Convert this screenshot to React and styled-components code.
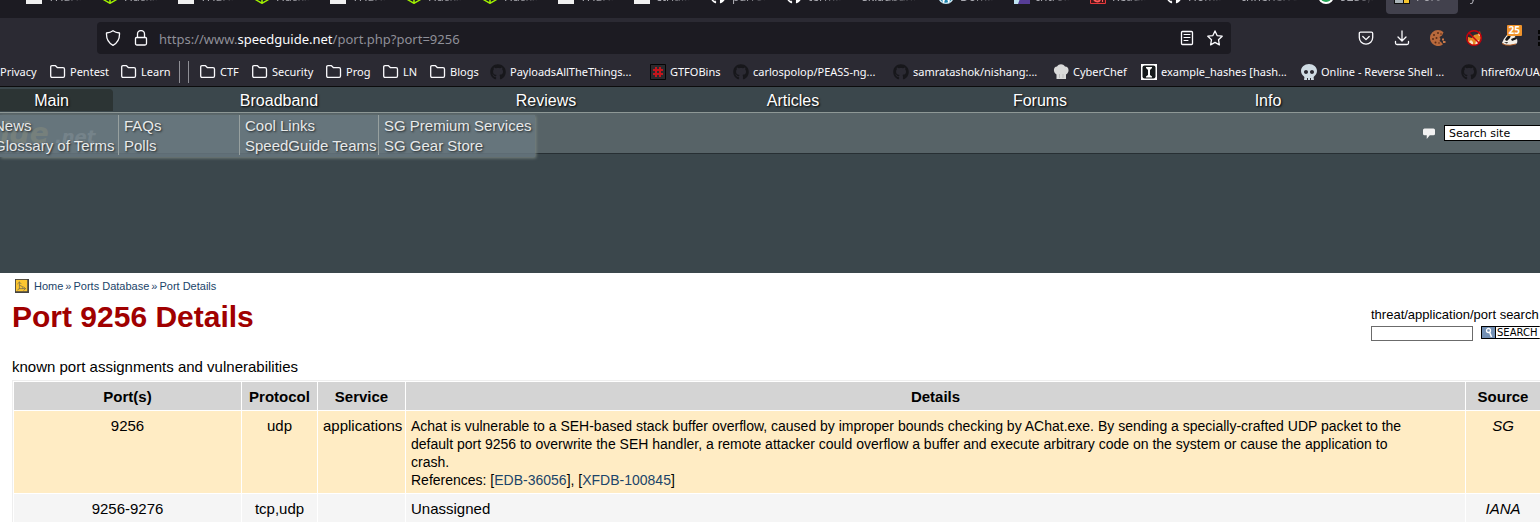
import React from 'react';
import styled, { createGlobalStyle } from 'styled-components';
import { FaGithub, FaWordpress, FaSkull } from 'react-icons/fa';
import { SiHackthebox } from 'react-icons/si';

const uiFont = '"Noto Sans", "Open Sans", sans-serif';
const siteFont = '"Liberation Sans", Arial, sans-serif';

const GlobalStyle = createGlobalStyle`
  *, *::before, *::after { box-sizing: border-box; }
  body { margin: 0; background: #fff; overflow: hidden; font-family: ${siteFont}; }
  a { text-decoration: none; color: inherit; }
`;

/* ---------- browser chrome ---------- */
const Chrome = styled.header`
  background: #2b2a33;
  color: #fbfbfe;
  font-family: ${uiFont};
  border-bottom: 1px solid #0c0c0d;
`;
const TabStrip = styled.div`
  display: flex;
  align-items: flex-end;
  gap: 4px;
  height: 18px;
  padding: 0 0 4px 18px;
  background: #1c1b22;
  overflow: hidden;
`;
const Tab = styled.button`
  flex: 0 0 72px;
  display: flex;
  align-items: center;
  gap: 6px;
  height: 36px;
  padding: 0 8px;
  border: 0;
  border-radius: 4px;
  background: ${(p) => (p.$active ? '#42414d' : 'transparent')};
  color: #a9a9b0;
  font: 12px ${uiFont};
  white-space: nowrap;
  overflow: hidden;
  svg { flex: none; }
`;
const TabLabel = styled.span`
  flex: 1;
  text-align: left;
  overflow: hidden;
  mask-image: linear-gradient(to right, #000 40%, transparent);
`;
const Toolbar = styled.div`
  display: flex;
  align-items: center;
  height: 40px;
  padding-left: 97px;
`;
const UrlBox = styled.form`
  flex: 1;
  display: flex;
  align-items: center;
  gap: 12px;
  height: 32px;
  padding: 0 8px;
  border-radius: 4px;
  background: #1c1b22;
`;
const UrlText = styled.a`
  flex: 1;
  padding-top: 2px;
  margin-left: -2px;
  color: #8f8f98;
  font-size: 13px;
  line-height: 20px;
  strong { font-weight: 400; color: #fbfbfe; }
`;
const IconButton = styled.button`
  position: relative;
  display: flex;
  align-items: center;
  justify-content: center;
  width: 16px;
  height: 16px;
  padding: 0;
  border: 0;
  background: none;
  color: #fbfbfe;
`;
const Actions = styled.div`
  display: flex;
  flex: 0 0 309px;
  min-width: 0;
  gap: 20px;
  padding-left: 127px;
  ${IconButton} { flex: 0 0 16px; }
`;
const Badge = styled.span`
  position: absolute;
  top: -5px;
  right: -4px;
  padding: 0 2px;
  border-radius: 1px;
  background: #f0932b;
  color: #fff;
  font: 700 10px/11px ${uiFont};
`;
const Bookmarks = styled.nav`
  display: flex;
  align-items: center;
  gap: 12px;
  height: 28px;
  overflow: hidden;
`;
const Bookmark = styled.a`
  flex: 0 0 ${(p) => p.$w}px;
  min-width: 0;
  display: flex;
  align-items: center;
  gap: 4px;
  font-size: 11px;
  line-height: 16px;
  white-space: nowrap;
  svg { flex: none; }
`;
const Divider = styled.span`
  flex: 0 0 10px;
  height: 22px;
  margin: 0 -1px 0 -2px;
  border: solid #8f8f96;
  border-width: 0 1px;
`;

/* ---------- site header ---------- */
const SiteHeader = styled.header`
  position: relative;
  min-height: 186px;
  background: #3b474c;
`;
const MainNav = styled.nav`
  display: grid;
  grid-template-columns: 113fr 332fr 202fr 292fr 202fr 254fr 145fr;
  height: 26px;
  padding-top: 2px;
  border-bottom: 1px solid #8e9896;
`;
const NavItem = styled.a`
  height: 22px;
  padding-right: ${(p) => (p.$active ? 10 : 0)}px;
  border-radius: 0 4px 0 0;
  background: ${(p) => (p.$active ? '#2c3434' : 'transparent')};
  color: #fff;
  font-size: 16px;
  line-height: 23px;
  text-align: center;
  text-shadow: 1px 1px 2px #000;
`;
const Band = styled.div`
  display: flex;
  align-items: center;
  justify-content: space-between;
  height: 41px;
  background: #576367;
  border-bottom: 1px solid #272f33;
`;
const Logo = styled.span`
  color: #b9a862;
  font: italic 700 28px/28px "DejaVu Sans", sans-serif;
  padding-top: 4px;
  small { font-size: 18px; color: #b4bcbc; }
`;
const SiteSearch = styled.form`
  display: flex;
  align-items: center;
  gap: 9px;
  input {
    width: 96px;
    height: 16px;
    padding: 0 4px;
    border: 1px solid #000;
    border-right: 0;
    border-radius: 0;
    font: 11px "DejaVu Sans", sans-serif;
    color: #000;
    &::placeholder { color: #000; opacity: 1; }
  }
`;
const Menu = styled.div`
  position: absolute;
  top: 28px;
  left: 0;
  display: flex;
  height: 42px;
  background: rgba(105, 120, 129, 0.84);
  box-shadow: 1px 1px 3px #7c8783;
`;
const MenuColumn = styled.ul`
  width: ${(p) => p.$w}px;
  height: 40px;
  margin: 0;
  padding: 1px 5px 0;
  list-style: none;
  font-size: 15px;
  line-height: 20px;
  color: #e8eaea;
  text-shadow: 1px 1px 2px #22282b;
  white-space: nowrap;
  & + & { border-left: 1px solid #97a09f; }
  &:first-child { padding-left: 0; text-indent: -6px; }
`;

/* ---------- page ---------- */
const Main = styled.main`
  padding: 5px 0 0 12px;
  color: #000;
`;
const Crumbs = styled.nav`
  display: flex;
  align-items: center;
  gap: 2px;
  height: 15px;
  padding-left: 3px;
  font-size: 11px;
  color: #1b4469;
  svg { margin-right: 3px; }
`;
const TitleRow = styled.div`
  display: flex;
  justify-content: space-between;
  align-items: flex-start;
  height: 65px;
`;
const Title = styled.h1`
  margin: 5px 0 0;
  color: #a00000;
  font-size: 30px;
  line-height: 38px;
`;
const PortSearch = styled.form`
  width: 169px;
  padding-top: 14px;
  font-size: 13px;
  line-height: 16px;
  white-space: nowrap;
`;
const PortSearchRow = styled.div`
  display: flex;
  gap: 8px;
  padding-top: 3px;
  input {
    width: 102px;
    height: 15px;
    padding: 0;
    border: 1px solid #6b6b6b;
    border-radius: 0;
  }
`;
const SearchButton = styled.button`
  display: flex;
  align-items: center;
  width: 59px;
  height: 13px;
  padding: 0;
  border: 1px solid #000;
  border-right: 0;
  border-radius: 1px;
  background: #fff;
  color: #000;
  font: 10px/11px "DejaVu Sans", sans-serif;
  svg { flex: none; margin-right: 1px; }
`;
const Intro = styled.p`
  margin: 0;
  padding-bottom: 4px;
  font-size: 15px;
  line-height: 18px;
`;
const PortTable = styled.table`
  width: 100%;
  table-layout: fixed;
  border-collapse: separate;
  border-spacing: 0;
  border: solid #eee;
  border-width: 1px 0 0 1px;
  padding: 1px 0 0 1px;
  font-size: 15px;
  line-height: 18px;
  th, td { border: solid #fff; border-width: 0 1px 1px 0; vertical-align: top; text-align: center; }
  th:last-child, td:last-child { border-right: 0; }
  th { padding: 6px 0 4px; background: #d4d4d4; }
  td { padding: 6px 5px 4px; }
  td:nth-child(4) { text-align: left; }
  td:last-child { font-style: italic; }
`;
const Row = styled.tr`
  background: ${(p) => (p.$known ? '#ffecc4' : '#f5f5f5')};
`;
const Description = styled.div`
  font-size: 14px;
`;
const Ref = styled.a`
  color: #1b4469;
`;
const Col = styled.col`
  width: ${(p) => (p.$w ? `${p.$w}px` : 'auto')};
`;

/* ---------- drawings ---------- */
const line = { fill: 'none', stroke: 'currentColor', strokeWidth: 1.3, strokeLinejoin: 'round', strokeLinecap: 'round' };
const Svg = ({ s = 16, children, ...rest }) => (
  <svg width={s} height={s} viewBox="0 0 16 16" aria-hidden="true" {...rest}>{children}</svg>
);
const Folder = () => (
  <Svg><path {...line} d="M.7 12V3Q.7 1.700 2 1.700h3.500l2 2H13q1.500 0 1.500 1.500V12q0 1.300-1.300 1.300H2Q.7 13.300.7 12z" /></Svg>
);
const Doc = () => <Svg><path fill="#f0f0f0" d="M0 0h16v16H0z" /></Svg>;
const Htb = () => <SiHackthebox size={16} color="#9fef00" />;
const Git = () => <FaGithub size={16} color="#fff" />;
const Wp = () => <Svg><circle cx="8" cy="8" r="8" fill="#fff" /><FaWordpress size={16} color="#1b83ad" /></Svg>;
const Purple = () => <Svg><path fill="#bfe3f2" d="M0 0h12v16H0z" /><path fill="#563d96" d="M10 0h6v16H4z" /></Svg>;
const Red = () => <Svg><path fill="#4a1518" stroke="#e5383b" d="M.5.5h15v15H.5z" /><path d="M4 12q4 3 6 0M12 13h1" stroke="#ff5a5a" strokeWidth="2" fill="none" /></Svg>;
const Green = () => <Svg><circle cx="8" cy="8" r="8" fill="#fff" /><circle cx="8" cy="8" r="6" fill="#23a455" /></Svg>;
const Guide = () => <Svg><path fill="#111" d="M0 0h16v16H0z" /><path fill="#aab4b8" d="M1 10h8v5H1z" /><path fill="#f6c52d" d="M10 10h5v5h-5z" /></Svg>;
const Shield = () => <Svg><path {...line} d="M8 .7c2 1.500 4 2 6.500 2.300C14.800 9 12.500 13 8 15.300 3.500 13 1.200 9 1.500 3 4 2.700 6 2.200 8 .7z" /></Svg>;
const Lock = () => <Svg><path {...line} d="M4.500 7.500V4a3.500 3.500 0 0 1 7 0v3.500M3.500 7.500h9q1 0 1 1v5q0 1.500-1.500 1.500H4q-1.500 0-1.500-1.500v-5q0-1 1-1z" /></Svg>;
const Reader = () => <Svg><path {...line} d="M3.500 1.500h9q1 0 1 1v11q0 1-1 1h-9q-1 0-1-1v-11q0-1 1-1z" /><path {...line} strokeWidth="1" d="M5 4.500h6M5 7.500h6M5 10.500h4" /></Svg>;
const Star = () => <Svg><path {...line} d="M8 .9l2.100 4.700 5.100.6-3.700 3.500.9 5.200L8 12.400l-4.400 2.500.9-5.200L.8 6.200l5.100-.6z" /></Svg>;
const Pocket = () => <Svg><path {...line} d="M2.500 2.200h11q1.200 0 1.200 1.200V7.500a6.700 6.700 0 0 1-13.400 0V3.400q0-1.200 1.200-1.200zM4.800 6.500L8 9.600l3.200-3.100" /></Svg>;
const Download = () => <Svg><path {...line} d="M8 1v9.500M4 7l4 4 4-4M1.500 11.500v1.500q0 1.500 1.500 1.500h10q1.500 0 1.500-1.500v-1.500" /></Svg>;
const Cookie = () => (
  <Svg>
    <path fill="#b9693c" d="M13.500 2.300A8 8 0 1 0 13 14.300l-2-2.300-1.500-1 1-2-1-2 2.500-1.500z" />
    <path fill="#c8794a" d="M12 8.500h2v2h-2zM13 11h2.500v2H13z" />
    <g fill="#5a2c17"><circle cx="4" cy="5" r="1" /><circle cx="8" cy="3" r="1" /><circle cx="3" cy="9" r="1" /><circle cx="6.500" cy="8" r="1" /><circle cx="5.500" cy="12.500" r="1" /><circle cx="9" cy="13" r=".8" /><circle cx="11" cy="4" r=".8" /></g>
  </Svg>
);
const NoFox = () => (
  <Svg>
    <path fill="#e88b25" d="M2 7l4 1 2-3 4-1 2-3 1 7-2 5-4 2H6l-4-3z" />
    <path fill="#f7e3c8" d="M3 12l2-2 2 2v3zM10 11l3-1-1 4-3 1zM12 5l2-2v3z" />
    <circle cx="8" cy="8" r="7.300" fill="none" stroke="#c8000c" strokeWidth="1.400" /><path d="M3 3l10 10" stroke="#c8000c" strokeWidth="1.400" />
  </Svg>
);
const Badger = () => (
  <Svg>
    <path fill="#f4efe8" d="M0 13q2-5 5-8l7 0 3 4q1 4-1 5l-5 1-5 0z" />
    <path fill="#161616" d="M3 10q2-5 6-5l-1 3-3 3zM9 9l5-2 1 2-5 2zM2 12.500l4-.5-1 1.500z" />
    <path fill="none" stroke="#b5622a" d="M0 13.500q3 2 8 1.700l6-1.200" />
  </Svg>
);
const Grid = () => <Svg><path fill="#050505" d="M0 0h4v4H0zM0 6h4v4H0zM0 12h4v4H0z" /></Svg>;
const Gtfo = () => <Svg><path fill="#2b2a2e" stroke="#050505" d="M.5.5h15v15H.5z" /><path d="M6 3v10M10 3v10M3 6h10M3 10h10" stroke="#c4161c" strokeWidth="2" /></Svg>;
const Chef = () => <Svg><path fill="#d9d9d9" d="M3.500 15v-4.500C-.5 8 .5 2.500 4 2.500 6-.5 10-.5 12 2.500c4 0 5 5.500 1 8V15z" /><path stroke="#bbb" d="M6.500 10v4M10 10v4" /></Svg>;
const Hash = () => <Svg><path fill="#fff" d="M0 0h16v16H0z" /><rect x="1.500" y="1.500" width="13" height="13" rx="2" fill="#15191b" /><path fill="#fff" d="M5 3h6v1L9 6v5l2 1.500v1H5v-1L7 11V6L5 4z" /></Svg>;
const DarkGit = () => <FaGithub size={16} color="#17171b" />;
const Skull = () => <FaSkull size={16} color="#cfdbe3" />;
const Bubble = () => <Svg s={12}><path fill="#f2f2f2" d="M2 2h12q2 0 2 2v5q0 2-2 2H9l-4 5v-5H2Q0 11 0 9V4q0-2 2-2z" /></Svg>;
const CrumbIcon = () => (
  <Svg s={14}><path fill="#444" d="M0 0h16v16H0z" /><path fill="#fcc630" d="M1 1h13v13H1z" /><path {...line} strokeWidth="1" stroke="#84764a" d="M5 11V3.500M3 5.500l2-2 2 2M5 11h7M10 9l2 2-2 2M5 11l-2 1.500M5 7l4 2v2" /></Svg>
);
const KeyIcon = () => (
  <svg width="14" height="11" viewBox="0 0 14 11" aria-hidden="true"><path fill="#7390b4" d="M0 0h13v11H0z" /><path fill="#000" d="M13 0h1v11h-1z" /><circle cx="6.500" cy="3.500" r="2" fill="none" stroke="#fff" strokeWidth="1.300" /><path d="M7.500 5l2 5" stroke="#fff" strokeWidth="1.500" /></svg>
);

/* ---------- data ---------- */
const tabs = [
  [Doc, 'THEF…'], [Htb, 'Hack…'], [Doc, 'THEF…'], [Htb, 'Hack…'], [Doc, 'THEF…'], [Htb, 'Hack…'], [Htb, 'Hack…'],
  [Doc, 'THEF…'], [Doc, 'ctrlal…'], [Git, 'parro…'], [Git, 'term…'], [null, 'skladbani'], [Wp, 'Dom…'], [Purple, 'Intro…'],
  [Red, 'Read…'], [Git, 'Hom…'], [null, 'Inherlerrdlg'], [Green, '9256,…'], [Guide, 'Port'], [null, 'y'],
];
const folders = [['Pentest', 59], ['Learn', 48]];
const folders2 = [['CTF', 40], ['Security', 62], ['Prog', 45], ['LN', 35], ['Blogs', 48]];
const links = [
  [DarkGit, 'PayloadsAllTheThings...', 148], [Gtfo, 'GTFOBins', 71], [DarkGit, 'carlospolop/PEASS-ng...', 148],
  [DarkGit, 'samratashok/nishang:...', 148], [Chef, 'CyberChef', 76], [Hash, 'example_hashes [hash...', 148],
  [Skull, 'Online - Reverse Shell ...', 148], [DarkGit, 'hfiref0x/UACME', 148],
];
const menu = [
  [118, ['News', 'Glossary of Terms']],
  [121, ['FAQs', 'Polls']],
  [139, ['Cool Links', 'SpeedGuide Teams']],
  [157, ['SG Premium Services', 'SG Gear Store']],
];

export default function App() {
  return (
    <>
      <GlobalStyle />
      <Chrome>
        <TabStrip>
          {tabs.map(([Icon, label], i) => (
            <Tab key={i} $active={i === 18}>
              {Icon && <Icon />}
              <TabLabel>{label}</TabLabel>
            </Tab>
          ))}
        </TabStrip>
        <Toolbar>
          <UrlBox>
            <IconButton type="button" aria-label="Tracking protection"><Shield /></IconButton>
            <IconButton type="button" aria-label="Connection secure"><Lock /></IconButton>
            <UrlText href="#">https://www.<strong>speedguide.net</strong>/port.php?port=9256</UrlText>
            <IconButton type="button" aria-label="Reader view"><Reader /></IconButton>
            <IconButton type="button" aria-label="Bookmark"><Star /></IconButton>
          </UrlBox>
          <Actions>
            <IconButton aria-label="Pocket"><Pocket /></IconButton>
            <IconButton aria-label="Downloads"><Download /></IconButton>
            <IconButton aria-label="Cookies"><Cookie /></IconButton>
            <IconButton aria-label="Proxy off"><NoFox /></IconButton>
            <IconButton aria-label="Privacy Badger"><Badger /><Badge>25</Badge></IconButton>
            <IconButton aria-label="Extensions"><Grid /></IconButton>
          </Actions>
        </Toolbar>
        <Bookmarks>
          <Bookmark href="#" $w={38}>Privacy</Bookmark>
          {folders.map(([t, w]) => <Bookmark href="#" key={t} $w={w}><Folder />{t}</Bookmark>)}
          <Divider />
          {folders2.map(([t, w]) => <Bookmark href="#" key={t} $w={w}><Folder />{t}</Bookmark>)}
          {links.map(([Icon, t, w]) => <Bookmark href="#" key={t} $w={w}><Icon />{t}</Bookmark>)}
        </Bookmarks>
      </Chrome>

      <SiteHeader>
        <MainNav>
          {['Main', 'Broadband', 'Reviews', 'Articles', 'Forums', 'Info'].map((t, i) => (
            <NavItem href="#" key={t} $active={i === 0}>{t}</NavItem>
          ))}
        </MainNav>
        <Band>
          <Logo>ide<small> .net</small></Logo>
          <SiteSearch>
            <Bubble />
            <input aria-label="Search site" placeholder="Search site" />
          </SiteSearch>
        </Band>
        <Menu>
          {menu.map(([w, items]) => (
            <MenuColumn key={w} $w={w}>
              {items.map((t) => <li key={t}><a href="#">{t}</a></li>)}
            </MenuColumn>
          ))}
        </Menu>
      </SiteHeader>

      <Main>
        <Crumbs>
          <CrumbIcon />
          <a href="#">Home</a>»<a href="#">Ports Database</a>»<a href="#">Port Details</a>
        </Crumbs>
        <TitleRow>
          <Title>Port 9256 Details</Title>
          <PortSearch>
            <label htmlFor="port-search">threat/application/port search</label>
            <PortSearchRow>
              <input id="port-search" />
              <SearchButton type="button"><KeyIcon />SEARCH</SearchButton>
            </PortSearchRow>
          </PortSearch>
        </TitleRow>
        <Intro>known port assignments and vulnerabilities</Intro>
        <PortTable>
          <colgroup><Col $w={228} /><Col $w={76} /><Col $w={88} /><Col /><Col $w={74} /></colgroup>
          <thead>
            <tr><th>Port(s)</th><th>Protocol</th><th>Service</th><th>Details</th><th>Source</th></tr>
          </thead>
          <tbody>
            <Row $known>
              <td>9256</td><td>udp</td><td>applications</td>
              <td>
                <Description>
                  Achat is vulnerable to a SEH-based stack buffer overflow, caused by improper bounds checking by AChat.exe. By sending a specially-crafted UDP packet to the<br />
                  default port 9256 to overwrite the SEH handler, a remote attacker could overflow a buffer and execute arbitrary code on the system or cause the application to<br />
                  crash.<br />
                  References: [<Ref href="#">EDB-36056</Ref>], [<Ref href="#">XFDB-100845</Ref>]
                </Description>
              </td>
              <td>SG</td>
            </Row>
            <Row>
              <td>9256-9276</td><td>tcp,udp</td><td /><td>Unassigned</td><td>IANA</td>
            </Row>
          </tbody>
        </PortTable>
      </Main>
    </>
  );
}
